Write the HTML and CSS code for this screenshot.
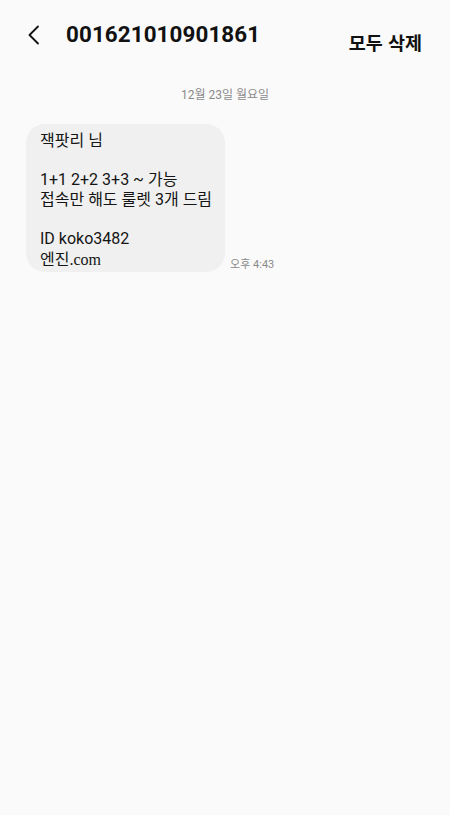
FILE: index.html
```html
<!DOCTYPE html>
<html lang="ko">
<head>
<meta charset="utf-8">
<link rel="stylesheet" href="styles.css">
</head>
<body>
<div class="app">
  <header class="topbar">
    <div class="left">
      <svg class="back" width="14" height="20" viewBox="0 0 14 20"><path d="M11 1.5 L2.5 10 L11 18.5" fill="none" stroke="#111" stroke-width="1.8" stroke-linecap="round" stroke-linejoin="round"/></svg>
      <h1 class="title">001621010901861</h1>
    </div>
    <button class="delete-all">모두 삭제</button>
  </header>
  <div class="date">12월 23일 월요일</div>
  <div class="row">
    <div class="bubble">
      <p>잭팟리 님</p>
      <p class="blank">&nbsp;</p>
      <p>1+1 2+2 3+3 ~ 가능</p>
      <p>접속만 해도 룰렛 3개 드림</p>
      <p class="blank">&nbsp;</p>
      <p>ID koko3482</p>
      <p>엔진<span class="serif">.com</span></p>
    </div>
    <div class="time">오후 4:43</div>
  </div>
</div>
</body>
</html>
```
FILE: styles.css
```css
html, body {
  margin: 0;
  padding: 0;
  background: #fafafa;
}
body {
  font-family: Roboto, "Noto Sans CJK KR", sans-serif;
  color: #111;
  width: 450px;
  height: 815px;
  overflow: hidden;
}
.app {
  display: flex;
  flex-direction: column;
}
.topbar {
  display: flex;
  justify-content: space-between;
  align-items: flex-start;
  padding: 22px 28px 0 27px;
  height: 58px;
  box-sizing: border-box;
}
.left {
  display: flex;
  align-items: center;
  gap: 25px;
}
.back {
  margin-top: 1px;
}
.title {
  margin: 0;
  font-size: 22.4px;
  font-weight: 700;
  letter-spacing: 0.1px;
  line-height: 24px;
}
.delete-all {
  border: 0;
  background: none;
  padding: 0;
  margin-top: 8px;
  font-family: "Noto Sans CJK KR", sans-serif;
  font-size: 18.5px;
  font-weight: 700;
  color: #111;
  line-height: 24px;
}
.date {
  text-align: center;
  font-size: 12px;
  color: #8a8a8a;
  margin-top: 29px;
  line-height: 16px;
}
.row {
  display: flex;
  align-items: flex-end;
  gap: 5px;
  padding-left: 26px;
  margin-top: 21px;
}
.bubble {
  background: #f0f0f0;
  border-radius: 19px;
  padding: 7px 13px 1px 14px;
  min-width: 197px;
  box-sizing: border-box;
  white-space: nowrap;
}
.bubble p {
  margin: 0;
  font-size: 16px;
  line-height: 19.5px;
  color: #151515;
}
.bubble p:last-child {
  line-height: 23px;
}
.serif {
  font-family: "Liberation Serif", serif;
  font-size: 16px;
}
.time {
  font-size: 11px;
  color: #8a8a8a;
  line-height: 14px;
  margin-bottom: 0px;
}
```
